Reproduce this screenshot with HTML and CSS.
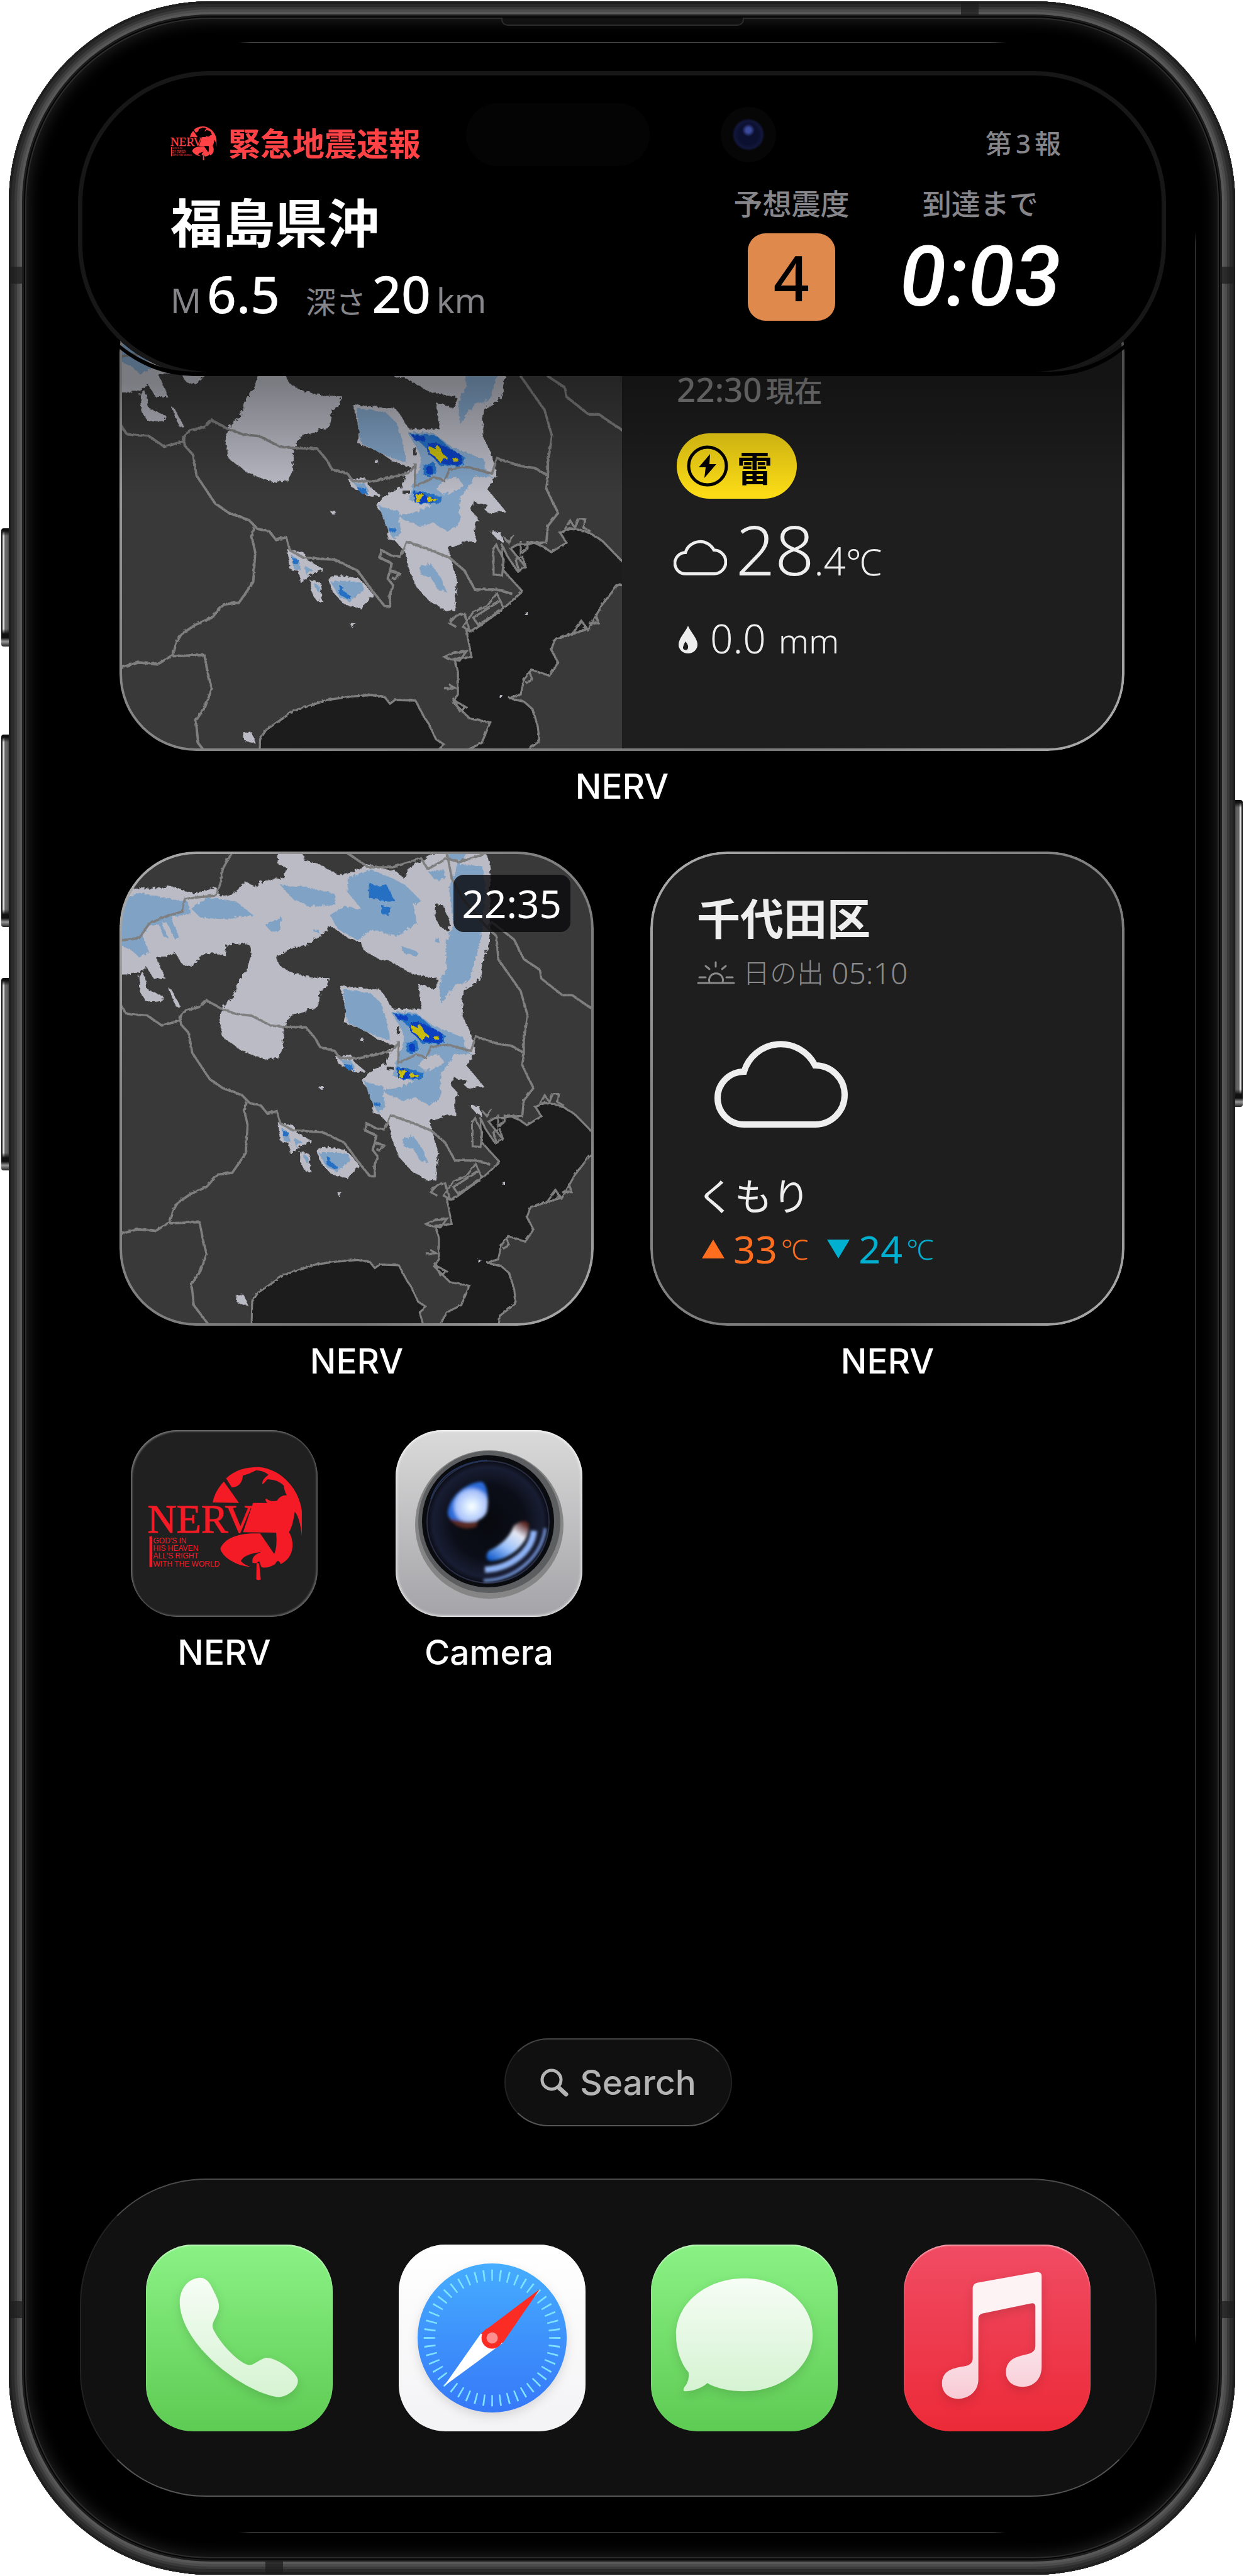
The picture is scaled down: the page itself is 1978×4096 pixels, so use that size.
FILE: index.html
```html
<!DOCTYPE html>
<html lang="ja">
<head>
  <meta charset="UTF-8">
  <meta name="viewport" content="width=device-width, initial-scale=1">
  <title>NERV ホーム画面</title>
  <link rel="stylesheet" href="styles.css">
</head>
<body>
  <!-- 共通パーツ -->
  <svg class="defs" aria-hidden="true">
    <defs>
      <filter id="rough" x="0" y="0" width="100%" height="100%">
        <feTurbulence type="turbulence" baseFrequency="0.06" numOctaves="3" seed="4"/>
        <feDisplacementMap in="SourceGraphic" scale="12"/>
      </filter>
      <filter id="rough-line" x="0" y="0" width="100%" height="100%">
        <feTurbulence type="turbulence" baseFrequency="0.07" numOctaves="2" seed="9"/>
        <feDisplacementMap in="SourceGraphic" scale="6"/>
      </filter>
      <filter id="soft"><feGaussianBlur stdDeviation="2"/></filter>
      <linearGradient id="glyph-white" x1="0" y1="0" x2="0" y2="1">
        <stop offset="0" stop-color="#f6fdf5"/>
        <stop offset="1" stop-color="#d5f3d2"/>
      </linearGradient>
      <linearGradient id="glyph-pink" x1="0" y1="0" x2="0" y2="1">
        <stop offset="0.3" stop-color="#fdf3f5"/>
        <stop offset="1" stop-color="#f8cbd6"/>
      </linearGradient>
      <linearGradient id="compass" x1="0" y1="0" x2="0" y2="1">
        <stop offset="0" stop-color="#46adff"/>
        <stop offset="1" stop-color="#3678f8"/>
      </linearGradient>
      <radialGradient id="lens">
        <stop offset="0" stop-color="#07090e"/>
        <stop offset="0.6" stop-color="#0b0e18"/>
        <stop offset="0.9" stop-color="#191d33"/>
        <stop offset="1" stop-color="#0a0c14"/>
      </radialGradient>
      <radialGradient id="flare" cx="0.6" cy="0.62">
        <stop offset="0" stop-color="#ffffff"/>
        <stop offset="0.2" stop-color="#e4f2ff"/>
        <stop offset="0.8" stop-color="#a6c0fa"/>
        <stop offset="1" stop-color="#2b6ad8"/>
      </radialGradient>
      <linearGradient id="flare2" x1="0.8" y1="0" x2="0.1" y2="1">
        <stop offset="0" stop-color="#5a2522"/>
        <stop offset="0.25" stop-color="#e4e8f4"/>
        <stop offset="0.6" stop-color="#9cc2fa"/>
        <stop offset="1" stop-color="#0b56c8"/>
      </linearGradient>
    </defs>

    <symbol id="cloud" viewBox="0 0 212 141">
      <path d="M47 51A42 42 0 0 0 47 135H160A47 47 0 0 0 160 41A61 61 0 0 0 47 51Z" fill="none" stroke="currentColor"/>
    </symbol>

    <!-- イチジクの葉 -->
    <symbol id="leaf" viewBox="0 0 296 297">
      <g transform="scale(.5102 .3333) translate(-56 -103)" fill="currentColor">
        <path d="M345 348L392 450L310 448C315 410 328 375 345 348Z"/>
        <path d="M352 333C380 290 420 278 455 279C530 290 582 395 588 490V608Q582 520 566 492Q560 560 548 590C568 640 562 715 522 742Q514 712 505 742Q480 765 462 756L455 728Q446 742 434 735Q430 700 462 684Q405 695 398 728Q408 746 430 756C380 750 338 705 334 668C350 610 400 592 458 596L502 694Q512 660 508 592L405 590L436 450H480Q470 432 478 430Q490 446 510 440Q522 412 541 414Q534 396 532 368Q510 336 480 338Q474 352 465 362Q462 340 484 316Q470 296 445 295Q425 312 404 320Q402 372 370 377Z"/>
        <path d="M447 735L455 740L460 815Q454 822 446 815Z"/>
        <rect x="113" y="610" width="9" height="146"/>
      </g>
    </symbol>

    <!-- 雨雲レーダー -->
    <symbol id="radar" viewBox="20 27 1480 1343" preserveAspectRatio="none">
      <rect x="20" y="27" width="1480" height="1343" fill="#393939"/>
      <g filter="url(#rough-line)" fill="#1d1d1d" stroke="#7f7f7f" stroke-width="6">
        <path d="M1510 835L1440 770 1405 750 1370 740 1345 738 1316 748 1335 775 1290 800 1265 785 1240 775 1215 780 1190 780 1170 790 1215 840 1190 850 1160 810 1145 780 1150 850 1180 880 1205 905 1150 950 1060 1010 1040 1010 1055 1080 1005 1085 1015 1120 1015 1180 1000 1200 1050 1245 1110 1255 1085 1310 1040 1330 1010 1380H1200L1205 1340 1255 1305 1250 1265 1235 1220 1210 1200 1165 1190 1200 1180 1210 1140 1230 1115 1285 1130 1310 1095 1290 1060 1300 1035 1345 1020 1400 1005 1440 940 1485 888H1510Z"/>
        <path d="M430 1380L432 1300 450 1275 530 1225 630 1195 700 1186 760 1182 800 1188 815 1205 830 1195 890 1197 915 1240 930 1260 950 1300 975 1315 955 1330 970 1380Z"/>
        <path d="M1120 790V860L1145 862 1150 820 1128 780ZM1185 820L1205 812 1215 840 1195 850ZM1060 975L1140 930 1150 950 1075 995ZM1010 1000L990 990 1010 970 1035 965 1050 1010 1030 1000 1060 960 1100 945 1130 910 1140 930M975 1080L1000 1070 1040 1065 1020 1090 985 1085ZM975 1165H1010L990 1155M1000 1190L1020 1225 1040 1215 1010 1200ZM1330 740L1345 715 1360 735 1370 712 1390 712 1385 735 1405 745M1350 1020L1380 985 1400 1010 1385 1000M1400 990L1430 990 1420 965M1200 770V805L1220 790V770M1150 760L1165 775 1180 755M1215 1150L1235 1140 1225 1120" fill="none"/>
      </g>
      <g filter="url(#rough)">
        <path fill="#bbbbc6" d="M20 130L60 128 120 130 180 122 250 145 280 135 320 125 330 150 370 145 410 108 440 125 470 108 530 100 540 70 512 60V27H590L595 50 640 60 700 90 740 85 790 60 830 70 880 80 905 100 920 70 980 40 1010 27H1160L1175 60 1172 290 1150 340 1145 385 1090 420 1087 490 1110 530 1130 590 1100 630 1155 690 1105 695 1060 660 1055 690 1075 710 1060 740 1070 775 1040 770 985 790 1000 840 1013 880 1005 955 985 960 930 930 890 890 865 830 860 800 830 770 808 765V710L775 680 780 665 810 640 850 625 860 590 880 575 820 555 780 530 720 510 725 480 705 405 830 415 850 440 870 470 960 470 950 400 1005 415 1010 385 930 370 860 335 830 330 780 305 770 280 740 275 680 237 640 265 600 290 560 295 505 325 520 350 560 370 610 380 672 382 665 405 645 420 635 465 550 490 530 525 527 580 510 610 470 612 400 590 340 550 328 500 345 460 375 435 385 400 415 360 428 320 425 290 410 285 350 290 348 320 310 312 275 318 240 350 215 345 190 310 170 320 130 322 150 360 160 385 125 385 100 350 75 370 20 372Z"/>
        <path fill="#bbbbc6" d="M78 375L95 370 105 415 155 435 150 448 100 450 82 420ZM170 412L180 415 208 465 195 465ZM510 790L560 800 570 820 620 845 580 860 550 880 545 850 520 845ZM580 875L610 880 615 930 600 932 580 900ZM632 870L650 862 720 868 740 885 767 915 730 950 680 940 645 905ZM692 605L740 600 750 620 790 650 750 650 700 625ZM378 1282L405 1278 420 1312 385 1302ZM695 988H712L702 1000ZM640 688H652V698H642ZM770 552H778V562H770ZM1110 745L1140 745 1150 775 1130 765ZM1212 960H1222V970H1212ZM1138 1182H1146V1190H1138Z"/>
        <path fill="#393939" d="M1003 172L1028 178 1050 225 1045 252 1015 235 1003 205ZM882 520H892V540H882ZM1060 668L1100 672 1090 690 1062 682ZM850 632H872V642H850Z"/>
        <path fill="#80a2c5" d="M20 175L70 140 150 155 230 165 240 200 200 205 180 215 205 270 190 272 165 225 150 225 170 270 155 265 140 230 110 235 90 265 110 310 80 325 50 300 20 290ZM240 185L290 155 380 165 435 205 350 215 270 212ZM520 120L600 125 690 145V175L610 180 560 160ZM730 100L800 75 870 100 910 120 960 165 935 180 945 230 880 265 800 245 760 275 700 245 675 205 720 180 775 190 730 140ZM470 230L525 210 515 250 490 250ZM895 290L950 310 945 322 905 312ZM1040 27H1100L1090 50H1050ZM1075 60L1150 65 1160 130 1150 250 1110 390 1065 405 1020 455 1015 400 1040 350 1035 290 1060 230 1045 130ZM980 80L1030 75 1035 100 1005 108ZM1003 270H1015V283H1003ZM625 247H642V254H625Z"/>
        <path fill="#80a2c5" d="M715 415L800 425 835 455 850 500 862 560 800 540 730 510 722 470ZM865 478L940 480 1000 520 1090 550 1100 590 1120 600 1060 596 1050 620 1020 650 1020 720 985 745 940 720 900 730 850 710 840 700 900 690 940 675 870 660 880 620 900 580 905 540ZM780 675L840 690 845 750 825 765 808 740ZM900 840L935 830 965 870 980 905 955 900 935 865 905 860ZM525 808L545 820 550 845 530 845ZM560 835L585 845 570 862ZM590 880L605 890 612 910 600 905ZM640 880L680 875 730 880 740 900 715 915 695 932 665 920ZM705 612L740 615 755 640 735 645Z"/>
        <path fill="#bbbbc6" d="M950 630L975 605 1015 600 1030 620 1000 640 970 645Z"/>
        <path fill="#2670c4" d="M795 110L820 125 850 118 878 165 840 165 795 155ZM835 178L865 183 855 205 835 200ZM870 482L950 488 990 520 1038 548 1025 570 960 568 920 520ZM912 565L945 560 950 585 930 598 912 590ZM880 635L925 640 968 652 960 668 890 670ZM715 625L742 628 750 645 730 643ZM526 815L546 820 540 830 526 828ZM665 888L675 892V902L700 918 690 926 665 912ZM812 735H830V744H812Z"/>
        <path fill="#1040c0" d="M925 508L955 508 985 520 1025 540V568L985 565 960 560 925 535ZM880 487L918 490 915 502 885 500ZM920 572L940 570 938 590 922 588ZM884 640L905 638 920 648 945 655 940 665 888 668Z"/>
        <path fill="#c8bc10" d="M928 515L945 522 958 515 968 535 986 548 972 550 962 560 945 542 930 535ZM888 645L912 642 908 660 892 668ZM922 650H932L936 656H952L946 662 924 664ZM998 546H1012V556H998Z"/>
      </g>
      <g filter="url(#rough-line)" fill="none" stroke="#7f7f7f" stroke-width="7" stroke-linejoin="round">
        <path d="M370 27L340 75 335 110 320 150 260 155 222 160 215 195 160 210 110 230 80 270 20 277"/>
        <path d="M15 450L40 485 105 490 150 518 205 505 210 490 225 475 270 465 290 447 335 470 380 485 430 490 490 518 530 522 600 523 630 555 645 580 690 590 705 610 760 612 820 600 870 590 890 565 888 625 945 600 975 610 990 580 1040 572 1115 590 1130 550 1200 570 1240 575 1280 595"/>
        <path d="M208 490L210 515 235 540 245 595 300 670 340 695 400 715 425 738 460 745 480 768 510 760 520 795 560 815 650 820 720 850 760 900 800 945H815V910L825 890 808 870 815 850 845 858 830 872 820 868M815 850L820 830 785 815 790 795 820 810 845 812 855 795 865 772 920 790 990 815 1035 850 1065 900 1130 900 1175 912"/>
        <path d="M415 735L408 760 418 800 412 880 370 935 325 940 290 975 240 995 200 1020 187 1040 175 1075 130 1100 75 1095 15 1110"/>
        <path d="M175 1078L268 1075 280 1130 290 1165 270 1215 243 1250 250 1310 300 1370"/>
        <path d="M725 27L795 70 870 70 960 45 980 75 1040 45 1080 55 1165 30"/>
        <path d="M1040 30L1055 100 1090 160 1165 240 1195 265 1200 330 1270 420 1292 490 1280 560V600L1275 630 1310 695 1280 730 1275 775H1220M1165 240L1180 225 1250 275 1280 330 1330 360 1335 385 1400 432H1430L1500 475"/>
      </g>
    </symbol>
  </svg>

  <div class="phone">
    <span class="side-key action"></span>
    <span class="side-key volume-up"></span>
    <span class="side-key volume-down"></span>
    <span class="side-key power"></span>
    <span class="speaker"></span>
    <span class="antenna antenna-top"></span>
    <span class="antenna antenna-bottom"></span>
    <span class="antenna antenna-left-1"></span>
    <span class="antenna antenna-left-2"></span>
    <span class="antenna antenna-right-1"></span>
    <span class="antenna antenna-right-2"></span>
    <span class="glint glint-top"></span>
    <span class="glint glint-right"></span>
    <span class="glint glint-bottom"></span>

    <!-- ダイナミックアイランド -->
    <section class="island">
      <span class="sensor"></span>
      <span class="lens"></span>
      <header class="island-head">
        <svg class="alert-logo" viewBox="26 57 248 184" aria-hidden="true">
          <use href="#leaf" width="296" height="297"/>
          <g fill="currentColor">
            <text class="nerv-word" x="26" y="163">NERV</text>
            <g class="nerv-motto">
              <text x="35" y="180">GOD'S IN</text>
              <text x="35" y="192">HIS HEAVEN</text>
              <text x="35" y="204">ALL'S RIGHT</text>
              <text x="35" y="217">WITH THE WORLD</text>
            </g>
          </g>
        </svg>
        <h1>緊急地震速報</h1>
        <span class="report">第<span>3</span>報</span>
      </header>
      <div class="island-body">
        <div class="quake">
          <h2>福島県沖</h2>
          <p class="quake-info">
            <span class="unit">M</span><b>6.5</b>
            <span class="unit depth">深さ</span><b>20</b><span class="unit">km</span>
          </p>
        </div>
        <div class="stat">
          <span class="stat-label">予想震度</span>
          <span class="intensity">4</span>
        </div>
        <div class="stat">
          <span class="stat-label">到達まで</span>
          <span class="countdown">0:03</span>
        </div>
      </div>
    </section>

    <!-- ウィジェット -->
    <main class="widgets">
      <div class="widget wide">
        <div class="wide-map"><svg><use href="#radar"/></svg></div>
        <div class="now">
          <p class="now-time">22:30<span>現在</span></p>
          <p class="warning">
            <svg viewBox="0 0 66 66" aria-hidden="true"><circle cx="33" cy="33" r="30" fill="none" stroke="#000" stroke-width="5"/><path d="M37 14L19 35H30L28 52L47 30H36Z"/></svg>
            雷
          </p>
          <p class="now-temp">
            <svg aria-hidden="true"><use href="#cloud"/></svg>
            <span class="big">28</span><span class="small">.4</span><span class="deg">℃</span>
          </p>
          <p class="now-rain">
            <svg viewBox="0 0 30 44" aria-hidden="true"><path d="M15 0C19 10 30 20 30 30A15 14 0 0 1 0 30C0 20 11 10 15 0Z" fill="#eee"/><path d="M11 25Q16 31 15 35A4 4 0 0 1 7 34Q8 29 11 25Z" fill="#1e1e1e"/></svg>
            <span>0.0</span><span class="mm">mm</span>
          </p>
        </div>
      </div>
      <p class="caption">NERV</p>

      <div class="pair">
        <div>
          <div class="widget square">
            <svg class="square-map"><use href="#radar"/></svg>
            <span class="map-time">22:35</span>
          </div>
          <p class="caption">NERV</p>
        </div>
        <div>
          <div class="widget square forecast">
            <h2>千代田区</h2>
            <p class="sunrise">
              <svg viewBox="0 0 61 38" aria-hidden="true"><path d="M2 35H59M4 26H14M47 26H57M30 2V9M14 8L20 13M46 8L40 13M20 34A11 11 0 1 1 41 34" fill="none" stroke="currentColor" stroke-width="3" stroke-linecap="round"/></svg>
              日の出<span>05:10</span>
            </p>
            <svg class="forecast-cloud" aria-hidden="true"><use href="#cloud"/></svg>
            <p class="sky">くもり</p>
            <p class="range">
              <span class="high"><svg viewBox="0 0 36 30" aria-hidden="true"><path d="M18 0L36 30H0Z"/></svg>33<i>℃</i></span>
              <span class="low"><svg viewBox="0 0 36 30" aria-hidden="true"><path d="M0 0H36L18 30Z"/></svg>24<i>℃</i></span>
            </p>
          </div>
          <p class="caption">NERV</p>
        </div>
      </div>

      <div class="apps">
        <a class="app" href="#">
          <span class="icon icon-nerv">
            <svg viewBox="0 0 296 297" aria-hidden="true">
              <use href="#leaf" width="296" height="297"/>
              <g fill="currentColor">
                <text class="nerv-word" x="26" y="163">NERV</text>
                <g class="nerv-motto">
                  <text x="35" y="180">GOD'S IN</text>
                  <text x="35" y="192">HIS HEAVEN</text>
                  <text x="35" y="204">ALL'S RIGHT</text>
                  <text x="35" y="217">WITH THE WORLD</text>
                </g>
              </g>
            </svg>
          </span>
          <span class="caption">NERV</span>
        </a>
        <a class="app" href="#">
          <span class="icon icon-camera">
            <svg viewBox="0 0 297 297" aria-hidden="true">
              <circle cx="149" cy="150" r="118" fill="#858585"/>
              <circle cx="149" cy="146" r="113" fill="#5d5e60"/>
              <circle cx="147" cy="145" r="105" fill="#0a0b0e"/>
              <circle cx="147" cy="146" r="97" fill="url(#lens)" stroke="#2a2e45" stroke-width="2"/>
              <g filter="url(#soft)">
                <path d="M85 140Q95 136 110 140Q122 146 134 136L128 154Q100 162 85 140Z" fill="#5a2a24"/>
                <path d="M136 82C146 84 149 110 145 130C138 146 118 148 104 144C90 142 84 142 83 132C84 108 110 84 136 82Z" fill="url(#flare)"/>
                <path d="M188 152Q206 138 212 150C214 180 180 208 150 208Q140 204 148 192C166 184 182 170 188 152Z" fill="url(#flare2)"/>
                <path d="M220 160C216 196 180 220 142 222" fill="none" stroke="#8eb2f4" stroke-width="10"/>
                <path d="M238 156C232 204 186 240 140 239" fill="none" stroke="#7fa4ec" stroke-width="4"/>
              </g>
              <path d="M56 110C70 66 110 50 146 48" fill="none" stroke="#23355e" stroke-width="2"/>
            </svg>
          </span>
          <span class="caption">Camera</span>
        </a>
      </div>
    </main>

    <footer class="home-bottom">
      <button class="search" type="button">
        <svg viewBox="0 0 45 45" aria-hidden="true"><circle cx="18" cy="18" r="15" fill="none" stroke="currentColor" stroke-width="5"/><path d="M29 30L41 41" stroke="currentColor" stroke-width="7" stroke-linecap="round"/></svg>
        Search
      </button>
      <nav class="dock">
        <a class="icon icon-green" href="#" aria-label="Phone">
          <svg viewBox="0 0 298 298"><path d="M80 54C92 50 100 58 104 66C112 82 120 94 115 107C112 118 104 124 107 134C115 152 140 182 160 191C170 196 178 184 190 181C202 178 236 198 242 214C246 230 222 246 208 243C150 232 58 160 54 95C53 74 64 58 80 54Z" fill="url(#glyph-white)"/></svg>
        </a>
        <a class="icon icon-safari" href="#" aria-label="Safari">
          <svg viewBox="0 0 298 298">
            <circle cx="149" cy="149" r="119" fill="url(#compass)"/>
            <circle class="ticks" cx="149" cy="149" r="100" pathLength="480"/>
            <path d="M225 71L131 142L166 157Z" fill="#fb2c24"/>
            <path d="M72 226L131 142L166 157Z" fill="#fff"/>
            <circle cx="149" cy="149" r="17" fill="#fb2c24"/>
            <circle cx="149" cy="149" r="9" fill="#ff8f8f"/>
          </svg>
        </a>
        <a class="icon icon-green" href="#" aria-label="Messages">
          <svg viewBox="0 0 298 298"><path d="M149 54C210 54 258 94 258 144S210 234 149 234C126 234 105 230 90 221C80 230 66 234 54 234Q50 233 53 228Q62 218 60 204C48 190 40 168 40 144C40 94 88 54 149 54Z" fill="url(#glyph-white)"/></svg>
        </a>
        <a class="icon icon-music" href="#" aria-label="Music">
          <svg viewBox="0 0 298 298"><path d="M110 70Q110 63 117 61L212 44Q220 43 220 51V195C220 215 207 227 190 227C172 227 163 216 163 204C163 180 185 178 200 174Q210 171 210 162V98Q209 92 202 94L125 110Q119 112 119 118V215C119 235 103 246 87 246C72 246 61 236 61 222C61 200 80 197 98 194Q110 191 110 182Z" fill="url(#glyph-pink)"/></svg>
        </a>
      </nav>
    </footer>
  </div>
</body>
</html>
```
FILE: styles.css
```css
* {
  margin: 0;
  padding: 0;
  box-sizing: border-box;
}
body {
  background: #fff;
  color: #fff;
  font-family: "Noto Sans", "Noto Sans CJK JP", sans-serif;
}
a {
  color: inherit;
  text-decoration: none;
}
svg {
  display: block;
  flex-shrink: 0;
}
.defs {
  position: absolute;
  width: 0;
  height: 0;
}

/* 本体 */
.phone {
  position: relative;
  display: flex;
  flex-direction: column;
  min-height: calc(100vh - 4px);
  margin: 2px 14px;
  padding: 111px 0 124px;
  border-radius: 320px;
  background: #000;
  box-shadow:
    inset 0 0 0 4px #1f1f1f,
    inset 0 0 0 9px #2b2b2b,
    inset 0 0 0 13px #3a3a3a,
    inset 0 0 0 17px #4c4c4c,
    inset 0 0 0 21px #585858,
    inset 0 0 0 24px #1c1c1c,
    inset 0 0 0 26px #050505,
    inset 0 0 0 28px #2c2c2c,
    inset 0 0 24px 30px #232323;
}
.side-key {
  position: absolute;
  left: -12px;
  width: 12px;
  border-radius: 4px 0 0 4px;
  background:
    linear-gradient(#111 4px, transparent 12px calc(100% - 28px), #111 calc(100% - 20px) calc(100% - 14px), #999 calc(100% - 8px), #222),
    linear-gradient(90deg, #111 0 1px, #ddd 3px 4px, #666 6px 9px, #4a4a4a);
}
.action {
  top: 838px;
  height: 188px;
}
.volume-up {
  top: 1166px;
  height: 306px;
}
.volume-down {
  top: 1553px;
  height: 306px;
}
.power {
  top: 1270px;
  left: auto;
  right: -12px;
  height: 488px;
  transform: scaleX(-1);
}
.speaker {
  position: absolute;
  top: 26px;
  left: 50%;
  width: 386px;
  height: 13px;
  margin-left: -192px;
  border: 2px solid #2c2c2c;
  border-top: 0;
  border-radius: 0 0 10px 10px;
  background: #111;
}
.antenna {
  position: absolute;
  background: rgba(30, 30, 30, 0.75);
}
.antenna-top {
  top: 0;
  right: 408px;
  width: 28px;
  height: 24px;
}
.antenna-bottom {
  bottom: 0;
  left: 408px;
  width: 28px;
  height: 24px;
}
.antenna-left-1,
.antenna-left-2 {
  left: 0;
  width: 21px;
  height: 27px;
}
.antenna-right-1,
.antenna-right-2 {
  right: 0;
  width: 21px;
  height: 27px;
}
.antenna-left-1,
.antenna-right-1 {
  top: 422px;
}
.antenna-left-2,
.antenna-right-2 {
  bottom: 408px;
}
.glint {
  position: absolute;
}
.glint-top,
.glint-bottom {
  left: 365px;
  right: 365px;
  height: 1px;
  background: linear-gradient(90deg, transparent, #444 20px calc(100% - 20px), transparent);
}
.glint-top {
  top: 65px;
}
.glint-bottom {
  bottom: 67px;
}
.glint-right {
  top: 366px;
  bottom: 366px;
  right: 63px;
  width: 1px;
  background: linear-gradient(transparent, #444 20px calc(100% - 20px), transparent);
}

/* ダイナミックアイランド */
.island {
  position: relative;
  z-index: 2;
  min-height: 485px;
  margin: 0 110px;
  padding: 83px 167px 0 147px;
  border-radius: 210px;
  background: #000;
  box-shadow: inset 0 0 0 7px #171717;
}
.island::after {
  content: "";
  position: absolute;
  inset: 300px 0 0;
  border-radius: 0 0 210px 210px;
  box-shadow: inset 0 -7px 0 #000;
}
.sensor {
  position: absolute;
  top: 51px;
  left: 617px;
  width: 292px;
  height: 100px;
  border-radius: 50px;
  background: #040404;
}
.lens {
  position: absolute;
  top: 57px;
  left: 1022px;
  width: 88px;
  height: 88px;
  border-radius: 50%;
  background:
    radial-gradient(circle at 50% 42%, #3a4a9c 0 4px, transparent 10px),
    radial-gradient(circle, #0c1030 0 16px, #12173c 22px, #060606 26px);
}
.island-head {
  display: flex;
  align-items: center;
  gap: 18px;
  height: 64px;
  color: #ff4245;
}
.island-head h1 {
  font-size: 51px;
  font-weight: 700;
  line-height: 64px;
}
.alert-logo {
  width: 74px;
  height: 56px;
}
.report {
  display: flex;
  gap: 6px;
  margin-left: auto;
  color: #86868a;
  font-size: 42px;
  font-weight: 500;
  line-height: 60px;
}
.island-body {
  display: flex;
  align-items: flex-start;
  gap: 80px;
}
.quake {
  margin-right: auto;
}
.quake h2 {
  margin-top: 44px;
  font-size: 83px;
  font-weight: 700;
  line-height: 100px;
}
.quake-info {
  display: flex;
  align-items: baseline;
  gap: 9px;
  margin-top: 17px;
  line-height: 90px;
}
.quake-info b {
  font-size: 82px;
  font-weight: 500;
}
.unit {
  color: #86868a;
  font-size: 54px;
  font-weight: 400;
}
.depth {
  margin-left: 32px;
  font-size: 48px;
}
.stat {
  display: flex;
  flex-direction: column;
  align-items: center;
  margin-top: 38px;
}
.stat-label {
  color: #86868a;
  font-size: 46px;
  font-weight: 500;
  line-height: 50px;
}
.intensity,
.countdown {
  height: 139px;
  margin-top: 23px;
  line-height: 139px;
}
.intensity {
  width: 139px;
  border-radius: 28px;
  background: #df894d;
  color: #000;
  font-size: 100px;
  font-weight: 500;
  text-align: center;
}
.countdown {
  font-family: Roboto, sans-serif;
  font-size: 134px;
  font-style: italic;
  font-weight: 500;
}

/* ウィジェット */
.widgets {
  margin: -159px 176px 0;
}
.widget {
  position: relative;
  overflow: hidden;
  border-radius: 122px;
  background: #1e1e1e;
}
.widget::after {
  content: "";
  position: absolute;
  inset: 0;
  padding: 4px;
  border-radius: inherit;
  background: linear-gradient(135deg, #b0b0b0, #888 25%, #777 75%, #b0b0b0);
  mask: linear-gradient(#000 0 0) content-box exclude, linear-gradient(#000 0 0);
}
.caption {
  display: block;
  margin-top: 26px;
  font-family: Inter, sans-serif;
  font-size: 55px;
  font-weight: 500;
  line-height: 60px;
  text-align: center;
}
.wide {
  display: grid;
  grid-template-columns: 1fr 1fr;
  aspect-ratio: 1599 / 755;
}
.wide::before {
  content: "";
  position: absolute;
  inset: 0;
  z-index: 1;
  background: linear-gradient(rgba(0, 0, 0, 0.35) 22%, transparent 46%);
}
.wide-map {
  display: flex;
  align-items: center;
  min-height: 0;
}
.wide-map svg {
  width: 100%;
  aspect-ratio: 1;
}
.now {
  padding: 150px 0 0 87px;
}
.now-time {
  color: #8a8a8a;
  font-size: 53px;
  font-weight: 500;
  line-height: 60px;
}
.now-time span {
  margin-left: 6px;
  font-size: 45px;
}
.warning {
  display: flex;
  align-items: center;
  gap: 14px;
  width: 191px;
  height: 104px;
  margin-top: 37px;
  padding-left: 16px;
  border-radius: 52px;
  background: #fbdb16;
  color: #000;
  font-size: 56px;
  font-weight: 700;
}
.warning svg {
  width: 66px;
}
.now-temp {
  display: flex;
  align-items: baseline;
  margin: 20px 0 0 -5px;
  color: #eee;
  font-weight: 300;
  line-height: 120px;
}
.now-temp svg {
  width: 85px;
  height: 57px;
  margin-right: 14px;
  stroke-width: 12px;
}
.big {
  font-size: 109px;
}
.small {
  font-size: 62px;
}
.deg {
  font-size: 58px;
}
.now-rain {
  display: flex;
  align-items: baseline;
  gap: 20px;
  margin-top: 22px;
  padding-left: 3px;
  color: #eee;
  font-size: 64px;
  font-weight: 300;
  line-height: 80px;
}
.now-rain svg {
  width: 30px;
}
.mm {
  font-size: 54px;
}
.pair {
  display: grid;
  grid-template-columns: 1fr 1fr;
  gap: 90px;
  margin-top: 74px;
}
.square {
  aspect-ratio: 1;
}
.square-map {
  width: 100%;
  height: 100%;
}
.map-time {
  position: absolute;
  top: 37px;
  right: 37px;
  padding: 0 14px;
  border-radius: 16px;
  background: rgba(10, 10, 12, 0.82);
  font-size: 62px;
  line-height: 91px;
}
.forecast {
  padding: 66px 0 0 74px;
  color: #eee;
}
.forecast h2 {
  font-size: 69px;
  font-weight: 700;
  line-height: 80px;
}
.sunrise {
  display: flex;
  align-items: center;
  gap: 12px;
  margin-top: 22px;
  color: #8a8a8a;
  font-size: 43px;
  font-weight: 300;
  line-height: 50px;
}
.sunrise svg {
  width: 61px;
}
.sunrise span {
  font-size: 48px;
}
.forecast-cloud {
  width: 212px;
  height: 141px;
  margin: 81px 0 0 28px;
  stroke-width: 10px;
}
.sky {
  margin-top: 73px;
  font-size: 60px;
  line-height: 70px;
}
.range {
  display: flex;
  gap: 30px;
  margin: 14px 0 0 8px;
  font-size: 61px;
  line-height: 70px;
}
.range span {
  display: flex;
  align-items: center;
}
.range svg {
  width: 36px;
  margin-right: 14px;
  fill: currentColor;
}
.range i {
  margin-left: 6px;
  font-size: 44px;
  font-style: normal;
  font-weight: 300;
}
.high {
  color: #ff6d1f;
}
.low {
  color: #00b0d0;
}

/* アプリ */
.apps {
  display: flex;
  gap: 124px;
  margin: 80px 0 0 18px;
}
.icon {
  display: block;
  width: 297px;
  height: 297px;
  border-radius: 74px;
  overflow: hidden;
}
.icon svg {
  width: 100%;
  height: 100%;
}
.icon-nerv {
  background: #202020;
  color: #f51b26;
  box-shadow: inset 2px 2px 3px #777, inset -2px -2px 3px #666;
}
.nerv-word {
  font-family: "Liberation Serif", serif;
  font-size: 64px;
  stroke: currentColor;
  stroke-width: 1px;
}
.nerv-motto {
  font-family: "Liberation Sans", sans-serif;
  font-size: 12px;
}
.icon-camera {
  background: linear-gradient(#dadada, #a4a3a7);
  box-shadow: inset 0 0 5px 1px #fff;
}

/* 検索とドック */
.home-bottom {
  margin: auto 125px 0 113px;
}
.search {
  display: flex;
  align-items: center;
  justify-content: center;
  gap: 18px;
  width: 362px;
  height: 140px;
  margin: 60px auto 83px;
  border: 2px solid #222;
  border-top-color: #444;
  border-bottom-color: #555;
  border-radius: 70px;
  background: #101010;
  color: #b4b4b4;
  font-family: Inter, sans-serif;
  font-size: 55px;
  font-weight: 500;
}
.search svg {
  width: 45px;
}
.dock {
  display: flex;
  justify-content: space-between;
  padding: 103px 103px 102px;
  border: 2px solid #222;
  border-top-color: #4a4a4a;
  border-bottom-color: #555;
  border-radius: 200px;
  background: #111;
}
.icon-green {
  background: linear-gradient(#8af285, #5ecb53);
}
.icon-safari {
  background: linear-gradient(#fff, #f3f3f5);
}
.icon-music {
  background: linear-gradient(#f04c64, #ec2a38);
}
.dock .icon {
  box-shadow: inset 0 2px 2px rgba(255, 255, 255, 0.5);
}
.dock svg {
  filter: drop-shadow(0 6px 8px rgba(0, 0, 0, 0.12));
}
.ticks {
  fill: none;
  stroke: #7fe3ff;
  stroke-width: 18px;
  stroke-dasharray: 2 8;
  stroke-dashoffset: 1;
}
```
